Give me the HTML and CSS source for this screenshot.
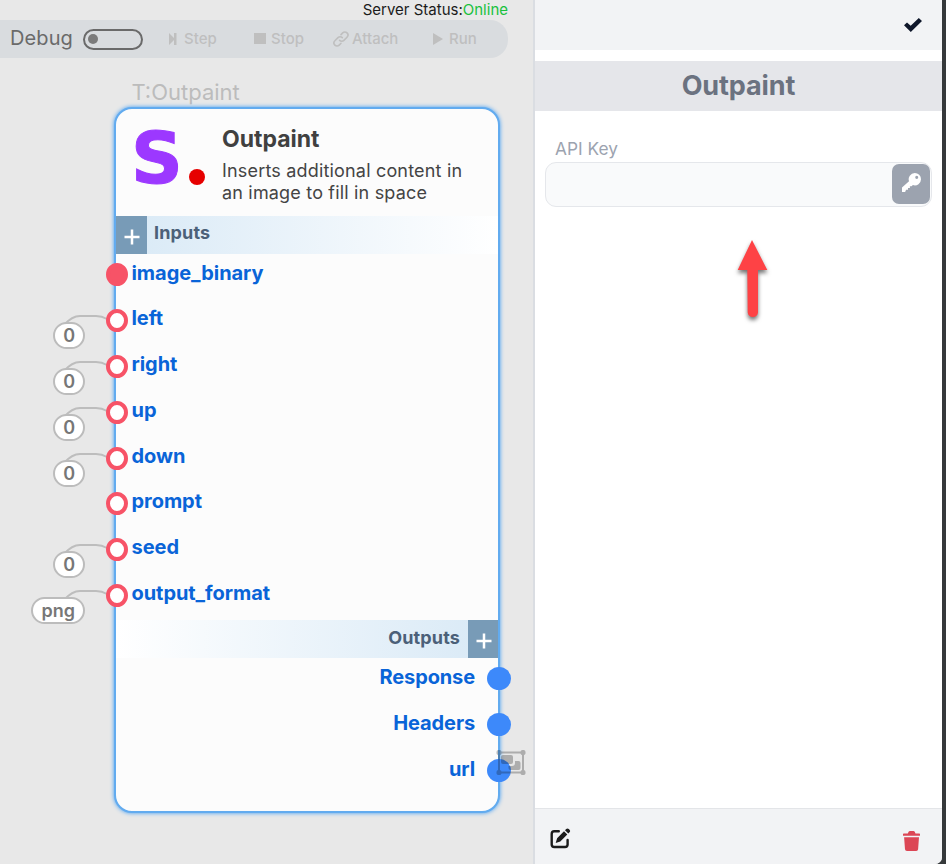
FILE: index.html
```html
<!DOCTYPE html>
<html lang="en">
<head>
<meta charset="utf-8">
<title>Outpaint</title>
<link rel="stylesheet" href="styles.css">
</head>
<body>
<div class="app">
  <main class="canvas">
    <div class="status"><span>Server Status:</span><span class="online">Online</span></div>
    <div class="toolbar">
      <span class="debug">Debug</span>
      <span class="toggle"><i></i></span>
      <span class="tool step"><svg width="8" height="12" viewBox="0 0 8 12"><path d="M0 0 5 5V0H7.500V12H5V7L0 12Z"/></svg>Step</span>
      <span class="tool stop"><svg width="12" height="11" viewBox="0 0 12 11"><path d="M0 0H12V11H0Z"/></svg>Stop</span>
      <span class="tool attach"><svg width="16" height="16" viewBox="0 0 16 16"><g class="line"><path d="M6.600 9.400a3 3 0 0 0 4.300 0l3.100-3.200a3 3 0 0 0-4.300-4.300L8 3.600"/><path d="M9.300 6.600a3 3 0 0 0-4.300 0L1.900 9.800a3 3 0 0 0 4.300 4.300L8 12.300"/></g></svg>Attach</span>
      <span class="tool run"><svg width="10" height="12" viewBox="0 0 10 12"><path d="M0 0 10 6 0 12Z"/></svg>Run</span>
    </div>

    <div class="tag">T:Outpaint</div>
    <section class="node">
      <header class="head">
        <div class="logo"><span>S</span><i></i></div>
        <div class="about">
          <h2>Outpaint</h2>
          <p>Inserts additional content in<br>an image to fill in space</p>
        </div>
      </header>
      <div class="bar inputs"><span class="plus"><svg width="16" height="16" viewBox="0 0 16 16"><path d="M8 .5V15.500M.5 8H15.500"/></svg></span><b>Inputs</b></div>
      <ul class="rows in">
        <li><i class="port full"></i><span>image_binary</span></li>
        <li><svg class="wire" width="46" height="14" viewBox="0 0 46 14"><path d="M2 11Q10 2 18 2H34Q40 2 45 5"/></svg><em>0</em><i class="port"></i><span>left</span></li>
        <li><svg class="wire" width="46" height="14" viewBox="0 0 46 14"><path d="M2 11Q10 2 18 2H34Q40 2 45 5"/></svg><em>0</em><i class="port"></i><span>right</span></li>
        <li><svg class="wire" width="46" height="14" viewBox="0 0 46 14"><path d="M2 11Q10 2 18 2H34Q40 2 45 5"/></svg><em>0</em><i class="port"></i><span>up</span></li>
        <li><svg class="wire" width="46" height="14" viewBox="0 0 46 14"><path d="M2 11Q10 2 18 2H34Q40 2 45 5"/></svg><em>0</em><i class="port"></i><span>down</span></li>
        <li><i class="port"></i><span>prompt</span></li>
        <li><svg class="wire" width="46" height="14" viewBox="0 0 46 14"><path d="M2 11Q10 2 18 2H34Q40 2 45 5"/></svg><em>0</em><i class="port"></i><span>seed</span></li>
        <li><svg class="wire" width="46" height="14" viewBox="0 0 46 14"><path d="M2 11Q10 2 18 2H34Q40 2 45 5"/></svg><em>png</em><i class="port"></i><span>output_format</span></li>
      </ul>
      <div class="bar outputs"><b>Outputs</b><span class="plus"><svg width="16" height="16" viewBox="0 0 16 16"><path d="M8 .5V15.500M.5 8H15.500"/></svg></span></div>
      <ul class="rows out">
        <li><span>Response</span><i></i></li>
        <li><span>Headers</span><i></i></li>
        <li><span>url</span><i></i></li>
      </ul>
      <svg class="group" width="30" height="27" viewBox="0 0 30 27">
        <path class="frame" d="M3 3.500H27V23.500H3Z"/>
        <path d="M2 1H3.500A2 2 0 0 1 5.500 3V4.500A2 2 0 0 1 3.500 6H2A2 2 0 0 1 .5 4.500V3A2 2 0 0 1 2 1ZM26.500 1H28A2 2 0 0 1 29.500 3V4.500A2 2 0 0 1 28 6H26.500A2 2 0 0 1 24.500 4.500V3A2 2 0 0 1 26.500 1ZM2 21H3.500A2 2 0 0 1 5.500 23V24.500A2 2 0 0 1 3.500 26H2A2 2 0 0 1 .5 24.500V23A2 2 0 0 1 2 21ZM26.500 21H28A2 2 0 0 1 29.500 23V24.500A2 2 0 0 1 28 26H26.500A2 2 0 0 1 24.500 24.500V23A2 2 0 0 1 26.500 21Z"/>
        <path d="M7 6H15Q17 6 17 8V13Q17 15 15 15H7Q5 15 5 13V8Q5 6 7 6Z"/>
        <path d="M19 12H22.500Q24.500 12 24.500 14V19Q24.500 21 22.500 21H14.500Q12.500 21 12.500 19V17H16Q19 17 19 14Z"/>
      </svg>
    </section>
  </main>

  <aside class="panel">
    <div class="top"><svg width="18" height="14" viewBox="0 0 18 14"><path d="M0 7.200 3 4.400 6.700 7.800 14.800 0 18 3 6.800 14Z"/></svg></div>
    <h1>Outpaint</h1>
    <div class="field">
      <label for="key">API Key</label>
      <div class="box"><input id="key" type="text"><button aria-label="Key"><svg width="19" height="19" viewBox="0 0 20 20"><path fill-rule="evenodd" d="M13.500 0A6.500 6.500 0 0 1 20 6.500 6.500 6.500 0 0 1 11.500 12.700L10 14H8.300V15.700H6.300V17.500H4.300L3.300 20H0V15.300L7.400 8.700A6.500 6.500 0 0 1 13.500 0ZM15.500 3A1.600 1.600 0 1 0 15.500 6.200 1.600 1.600 0 1 0 15.500 3Z"/></svg></button></div>
    </div>
    <svg class="arrow" width="44" height="92" viewBox="0 0 44 92"><path d="M22 4 37.300 34H28V76.500A5.200 5.200 0 0 1 17.700 76.500L17.300 34H7.700Z"/></svg>
    <footer>
      <svg width="21" height="21" viewBox="0 0 21 21"><path class="sheet" d="M8.800 3.300H4.300Q1.700 3.300 1.700 5.900V16.500Q1.700 19 4.300 19H15Q17.600 19 17.600 16.500V12"/><path d="M14 3.200 17.300 6.500 10.300 13.500 5.700 15 7.100 10.200ZM15 2.200 16.200 1Q17.500-.2 18.800 1L19.500 1.700Q20.800 3 19.500 4.300L18.300 5.500Z"/></svg>
      <svg class="trash" width="17" height="20" viewBox="0 0 17 20"><path d="M0 3Q0 2.500.8 2.500H4.800L5.600.8Q6 0 7 0H10.500Q11.300 0 11.700.8L12.500 2.500H16.300Q17 2.500 17 3V4.700H0ZM1.100 6.200H16L15.100 18.200Q15 20 13.200 20H4Q2.100 20 2 18.200Z"/></svg>
    </footer>
  </aside>
</div>
</body>
</html>
```
FILE: styles.css
```css
* { box-sizing: border-box; }
body { margin: 0; font-family: Inter, "Liberation Sans", sans-serif; }
h1, h2, p, ul { margin: 0; padding: 0; }
svg { display: block; flex: none; }
.app { display: flex; width: 946px; height: 864px; overflow: hidden; background: #36393b; }

.canvas { position: relative; flex: none; width: 533px; height: 864px; background: #e8e8e8; }
.status { height: 20px; padding-right: 25px; text-align: right; font-size: 15px; line-height: 20px; color: #1b1b1b; }
.online { color: #19c13d; }
.toolbar { display: flex; align-items: center; width: 508px; height: 38px; padding-left: 10px; border-radius: 0 18px 18px 0; background: #d9dcdf; }
.debug { width: 73px; margin-top: -2px; font-size: 20px; letter-spacing: .1px; color: #6a6a6a; }
.toggle { width: 60px; height: 21px; padding: 4px 3px; border: 2px solid #6a6a6a; border-radius: 11px; }
.toggle i { display: block; width: 10px; height: 10px; margin-top: -.5px; border-radius: 50%; background: #7b7b7b; }
.tool { display: flex; align-items: center; margin-top: -1px; font-size: 15px; font-weight: 500; color: #bfbfbf; }
.tool svg { fill: #bfbfbf; }
.tool .line { fill: none; stroke: #bfbfbf; stroke-width: 1.600; stroke-linecap: round; }
.step { gap: 7px; width: 85px; margin-left: 26px; }
.stop { gap: 5px; width: 79px; }
.attach { gap: 3px; width: 100px; }
.run { gap: 6px; }

.tag { position: absolute; left: 131.5px; top: 79px; font-size: 22px; line-height: 27px; color: #bcbcbc; }
.node { position: absolute; left: 114px; top: 107px; width: 386px; height: 706px; border: 2px solid #62abef; border-radius: 18px; background: #fcfcfc; box-shadow: 0 0 4px #3b9bf5; }
.head { display: flex; height: 107px; padding-left: 16px; }
.logo { display: flex; width: 90px; }
.logo span { width: 57px; margin-left: -1px; margin-right: 1px; font: bold 72px/99px "DejaVu Sans", sans-serif; color: #9c38ff; -webkit-text-stroke: 1px #9c38ff; }
.logo i { width: 16px; height: 16px; margin-top: 60px; border-radius: 50%; background: #e60000; }
.about { padding-top: 15px; }
.about h2 { font-size: 23px; line-height: 30px; font-weight: 700; color: #404040; }
.about p { padding-top: 6px; font-size: 18px; line-height: 22px; letter-spacing: .18px; color: #444; white-space: nowrap; }
.bar { display: flex; height: 38px; font-size: 18px; line-height: 33px; color: #4b6078; }
.bar b { font-weight: 700; letter-spacing: .15px; }
.inputs { gap: 7.5px; background: linear-gradient(90deg, #d8e9f6, #fff); }
.outputs { gap: 7.5px; justify-content: flex-end; line-height: 35px; background: linear-gradient(90deg, #fff, #d8e9f6); }
.plus { display: flex; width: 30.5px; height: 38px; padding: 13px 0 0 8px; background: #789bb7; }
.plus svg { stroke: #fff; stroke-width: 2.500; }
.rows { list-style: none; font-size: 20px; font-weight: 700; line-height: 24px; letter-spacing: -.05px; color: #0964d8; }
.rows li { position: relative; display: flex; }
.in li { height: 45.800px; padding-top: 8.500px; }
.in li > span { margin-left: 3.5px; margin-top: -2px; }
.port { width: 22px; height: 23px; margin-top: 1px; margin-left: -10px; border: 4px solid #f75367; border-radius: 50%; background: #fff; position: relative; }
.full { margin-top: 0; background: #f75367; }
.wire { position: absolute; left: -54px; top: 14.5px; fill: none; stroke: #bdbdbd; stroke-width: 2; }
.rows em { position: absolute; right: 413px; top: 22.5px; height: 27px; padding: 0 8px; border: 2px solid #bcbcbc; border-radius: 14px; background: #fff; font-style: normal; font-size: 18px; font-weight: 600; line-height: 23px; letter-spacing: 0; color: #777; }
.out li { height: 46px; justify-content: flex-end; padding-top: 9px; }
.out span { margin-top: -2.5px; margin-right: 12px; letter-spacing: -.12px; }
.out i { width: 24px; height: 23px; margin-right: -13px; border-radius: 50%; background: #3d89fa; }
.group { position: absolute; left: 380px; top: 640px; opacity: .27; fill: #111; }
.group .frame { fill: none; stroke: #111; stroke-width: 2; }

.panel { position: relative; display: flex; flex-direction: column; width: 409px; height: 864px; border-left: 2px solid #dadde2; border-radius: 0 0 7px 0; background: #fff; overflow: hidden; }
.top { display: flex; justify-content: flex-end; height: 50px; padding: 17.5px 20px 0 0; background: #f2f3f5; fill: #0f172a; }
.panel h1 { height: 50px; margin-top: 11px; background: #e5e6ea; text-align: center; font-size: 27px; line-height: 50px; font-weight: 700; letter-spacing: -.1px; color: #6b7280; }
.field { padding: 26px 10px 0; }
.field label { display: block; height: 25px; padding-left: 10px; font-size: 17.300px; line-height: 24px; color: #9ca3af; }
.box { display: flex; width: 387px; height: 45px; padding: 1px; border: 1px solid #e5e7eb; border-radius: 11px; background: #f9fafb; }
.box input { flex: 1; min-width: 0; border: 0; background: transparent; outline: 0; }
.box button { display: flex; width: 38px; height: 40px; padding: 9px 0 0 10px; border: 0; border-radius: 7px; background: #9ca3af; fill: #fff; }
.arrow { position: absolute; left: 195px; top: 236px; fill: #fe4245; filter: drop-shadow(0 3px 2px rgba(0, 0, 0, .55)); }
.panel footer { display: flex; justify-content: space-between; height: 56px; margin-top: auto; padding: 19px 22px 0 15px; border-top: 1px solid #e3e5e8; background: #f2f3f5; fill: #1b1b1b; }
.sheet { fill: none; stroke: #1b1b1b; stroke-width: 2.400; stroke-linecap: round; }
.trash { margin-top: 3px; fill: #dc4655; }
```
